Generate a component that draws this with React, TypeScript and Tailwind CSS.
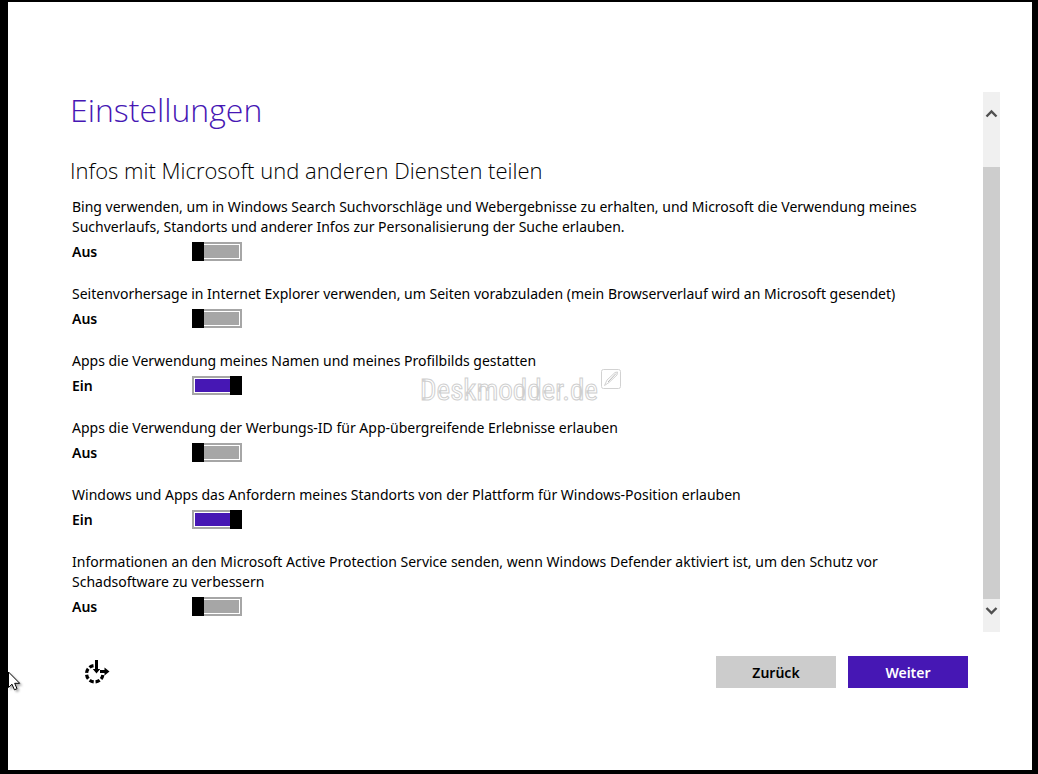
import React, { useState } from "react";

const initialSettings = [
  {
    id: "bing",
    text: "Bing verwenden, um in Windows Search Suchvorschläge und Webergebnisse zu erhalten, und Microsoft die Verwendung meines Suchverlaufs, Standorts und anderer Infos zur Personalisierung der Suche erlauben.",
    enabled: false,
  },
  {
    id: "prediction",
    text: "Seitenvorhersage in Internet Explorer verwenden, um Seiten vorabzuladen (mein Browserverlauf wird an Microsoft gesendet)",
    enabled: false,
  },
  {
    id: "profile",
    text: "Apps die Verwendung meines Namen und meines Profilbilds gestatten",
    enabled: true,
  },
  {
    id: "advertising",
    text: "Apps die Verwendung der Werbungs-ID für App-übergreifende Erlebnisse erlauben",
    enabled: false,
  },
  {
    id: "location",
    text: "Windows und Apps das Anfordern meines Standorts von der Plattform für Windows-Position erlauben",
    enabled: true,
  },
  {
    id: "defender",
    text: "Informationen an den Microsoft Active Protection Service senden, wenn Windows Defender aktiviert ist, um den Schutz vor Schadsoftware zu verbessern",
    enabled: false,
  },
];

function Toggle({ id, checked, onChange }: { id: string; checked: boolean; onChange: () => void }) {
  return (
    <input
      type="checkbox"
      role="switch"
      id={id}
      checked={checked}
      onChange={onChange}
      className="relative block h-[19px] w-[50px] shrink-0 cursor-pointer appearance-none border-2 border-[#a6a6a6] bg-[#a6a6a6] bg-clip-content p-px before:absolute before:-top-0.5 before:-left-0.5 before:h-[19px] before:w-3 before:bg-black checked:bg-[#4617b4] checked:before:-right-0.5 checked:before:left-auto"
    />
  );
}

function Scrollbar() {
  return (
    <div className="flex w-[17px] shrink-0 flex-col bg-[#f0f0f0]">
      <button type="button" aria-label="Nach oben" className="flex h-[75px] justify-center pt-4">
        <svg width="13" height="11" viewBox="0 0 13 11" fill="none" stroke="#505050" strokeWidth="2.4">
          <path d="M1.5 8.5 6.5 3.5 11.5 8.5" />
        </svg>
      </button>
      <div className="flex-1 bg-[#cdcdcd]" />
      <button type="button" aria-label="Nach unten" className="flex h-[33px] justify-center pt-1.5">
        <svg width="13" height="11" viewBox="0 0 13 11" fill="none" stroke="#505050" strokeWidth="2.4">
          <path d="M1.5 3 6.5 8 11.5 3" />
        </svg>
      </button>
    </div>
  );
}

function EaseOfAccessIcon() {
  return (
    <svg width="26" height="26" viewBox="0 0 26 26" fill="none" stroke="#000">
      <path d="M9.5 6.6A8.2 8.2 0 1 0 18.9 15.6" strokeWidth="3.2" strokeDasharray="4.4 1.9" />
      <path d="M12.5 1V11M16 12.5H21" strokeWidth="3" />
      <path d="M8.8 10 12.5 14.5 16.2 10ZM20.5 8.6 25.5 12.5 20.5 16.4Z" fill="#000" stroke="none" />
    </svg>
  );
}

function Watermark() {
  return (
    <div className="pointer-events-none absolute top-[366px] left-[412px] flex items-start gap-0.5">
      <span className="font-['Roboto_Condensed','Roboto',sans-serif] text-[29px] leading-[44px] text-white [-webkit-text-stroke:1px_#cfcfcf]">
        Deskmodder.de
      </span>
      <svg width="22" height="22" viewBox="0 0 22 22" fill="none" stroke="#d2d2d2">
        <rect x="1.5" y="1.5" width="19" height="19" rx="2" />
        <path d="M4.5 17.5 7 12 15 4.5 17.5 4 17 7 9 14.5Z" />
        <path d="M8 14 16 5.5" stroke="#b8b8b8" />
      </svg>
    </div>
  );
}

export default function App() {
  const [settings, setSettings] = useState(initialSettings);

  const toggleSetting = (id: string) => {
    setSettings(settings.map((s) => (s.id === id ? { ...s, enabled: !s.enabled } : s)));
  };

  return (
    <div className="min-h-screen border-t-2 border-r-6 border-b-4 border-l-8 border-black bg-white font-['Noto_Sans','Open_Sans',sans-serif] text-black">
      <main className="relative pt-[90px] pr-8 pb-20 pl-[62px]">
        <div className="flex">
          <div className="flex-1 pb-4">
            <h1 className="font-['Open_Sans',sans-serif] text-[32px] leading-9 font-light text-[#4617b4]">
              Einstellungen
            </h1>
            <h2 className="mt-[26px] font-['Open_Sans',sans-serif] text-[22px] leading-8 font-light">
              Infos mit Microsoft und anderen Diensten teilen
            </h2>
            <ul className="mt-[11px] max-w-[890px] space-y-[23px] pl-0.5 text-[14px] leading-5">
              {settings.map((setting) => (
                <li key={setting.id}>
                  <label htmlFor={setting.id} className="block">
                    {setting.text}
                  </label>
                  <div className="mt-[5px] flex h-[19px] items-center">
                    <span className="w-[120px] font-semibold">{setting.enabled ? "Ein" : "Aus"}</span>
                    <Toggle
                      id={setting.id}
                      checked={setting.enabled}
                      onChange={() => toggleSetting(setting.id)}
                    />
                  </div>
                </li>
              ))}
            </ul>
          </div>
          <Scrollbar />
        </div>

        <div className="mt-6 flex items-center gap-3 pr-8 pl-3.5">
          <button type="button" aria-label="Erleichterte Bedienung" className="mr-auto">
            <EaseOfAccessIcon />
          </button>
          <button type="button" className="h-8 w-[120px] bg-[#cccccc] text-[14px] font-semibold">
            Zurück
          </button>
          <button type="button" className="h-8 w-[120px] bg-[#4617b4] text-[14px] font-semibold text-white">
            Weiter
          </button>
        </div>

        <Watermark />

        <svg
          className="pointer-events-none absolute top-[669px] left-0 drop-shadow-[2px_2px_1px_rgba(0,0,0,0.3)]"
          width="13"
          height="20"
          viewBox="0 0 13 20"
        >
          <path d="M0.5 1V16.5L4 13.2 6.4 18.8 9 17.7 6.7 12.3H11.7Z" fill="#fff" stroke="#000" />
        </svg>
      </main>
    </div>
  );
}
